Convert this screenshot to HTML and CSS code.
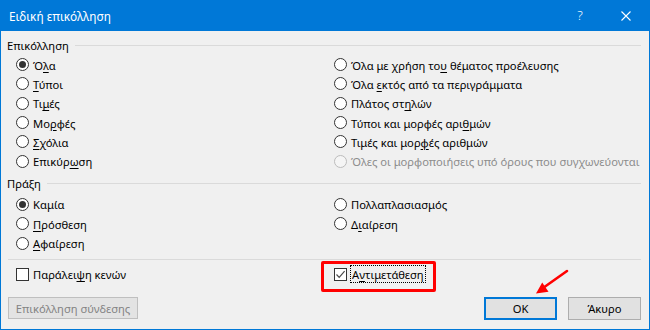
FILE: index.html
```html
<!DOCTYPE html>
<html lang="el">
<head>
<meta charset="utf-8">
<title>Ειδική επικόλληση</title>
<link rel="stylesheet" href="styles.css">
</head>
<body>
<div class="window">
  <div class="titlebar">
    <span class="title">Ειδική επικόλληση</span>
    <span class="capbtn help">?</span>
    <span class="capbtn close">
      <svg width="10" height="10" viewBox="0 0 10 10"><path d="M0.5 0.5 L9.5 9.5 M9.5 0.5 L0.5 9.5" stroke="#fff" stroke-width="1.1" fill="none"/></svg>
    </span>
  </div>
  <div class="content">
    <div class="group-head"><span class="group-label">Επικόλληση</span><span class="rule"></span></div>
    <div class="options six">
      <label class="opt"><span class="radio checked"></span><span>Ό<u>λ</u>α</span></label>
      <label class="opt"><span class="radio"></span><span>Όλα με χρήση το<u>υ</u> θέματος προέλευσης</span></label>
      <label class="opt"><span class="radio"></span><span><u>Τ</u>ύποι</span></label>
      <label class="opt"><span class="radio"></span><span>Όλα <u>ε</u>κτός από τα περιγράμματα</span></label>
      <label class="opt"><span class="radio"></span><span>Τι<u>μ</u>ές</span></label>
      <label class="opt"><span class="radio"></span><span>Πλάτος στ<u>η</u>λών</span></label>
      <label class="opt"><span class="radio"></span><span>Μο<u>ρ</u>φές</span></label>
      <label class="opt"><span class="radio"></span><span>Τύποι και μορφές αρι<u>θ</u>μών</span></label>
      <label class="opt"><span class="radio"></span><span><u>Σ</u>χόλια</span></label>
      <label class="opt"><span class="radio"></span><span>Τιμές και μορ<u>φ</u>ές αριθμών</span></label>
      <label class="opt"><span class="radio"></span><span>Επικύρ<u>ω</u>ση</span></label>
      <label class="opt disabled"><span class="radio"></span><span>Όλες οι μορφοποιήσεις υπό όρους που συγχωνεύονται</span></label>
    </div>
    <div class="group-head second"><span class="group-label">Πράξη</span><span class="rule"></span></div>
    <div class="options three">
      <label class="opt"><span class="radio checked"></span><span>Καμία</span></label>
      <label class="opt"><span class="radio"></span><span>Πολλαπλασιασμός</span></label>
      <label class="opt"><span class="radio"></span><span><u>Π</u>ρόσθεση</span></label>
      <label class="opt"><span class="radio"></span><span>Δ<u>ι</u>αίρεση</span></label>
      <label class="opt"><span class="radio"></span><span><u>Α</u>φαίρεση</span></label>
    </div>
    <div class="separator"></div>
    <div class="options checks">
      <label class="opt"><span class="check"></span><span>Παράλει<u>ψ</u>η κενών</span></label>
      <label class="opt"><span class="check checked"><svg width="11" height="11" viewBox="0 0 11 11"><path d="M1.5 5.5 L4.2 8.3 L9.6 2.2" stroke="#4a4a4a" stroke-width="1.2" fill="none"/></svg></span><span class="focus">Α<u>ν</u>τιμετάθεση</span></label>
    </div>
    <div class="buttons">
      <span class="btn disabled-btn">Επικόλληση σύνδεσης</span>
      <span class="btn default-btn">OK</span>
      <span class="btn">Άκυρο</span>
    </div>
  </div>
  <div class="highlight"></div>
  <svg class="arrow" width="650" height="330" viewBox="0 0 650 330">
    <line x1="567" y1="271" x2="543" y2="288" stroke="#ff0000" stroke-width="2.6" stroke-linecap="round"/>
    <polygon points="536,293.5 548.5,291.8 542.2,282.6" fill="#ff0000"/>
  </svg>
</div>
</body>
</html>
```
FILE: styles.css
```css
* { box-sizing: border-box; }
html, body { margin: 0; padding: 0; }
body {
  width: 650px;
  height: 330px;
  overflow: hidden;
  font-family: "Noto Sans", "Liberation Sans", sans-serif;
  font-size: 11.2px;
  color: #000;
}
.window {
  position: relative;
  width: 650px;
  height: 330px;
  background: #f0f0f0;
  border: 1px solid #0078d7;
  border-top: none;
}
.titlebar {
  height: 31px;
  background: #0078d7;
  color: #fff;
  display: flex;
  align-items: center;
  margin: 0 -1px;
  padding-left: 9px;
}
.title { flex: 1; font-size: 11.8px; padding-top: 1px; }
.capbtn {
  width: 46px;
  height: 31px;
  display: flex;
  align-items: center;
  justify-content: center;
}
.help { font-size: 13px; font-weight: 300; padding-bottom: 1px; }
.close { margin-right: 1px; }
.content {
  padding: 0 8px 0 6px;
}
.group-head {
  display: flex;
  align-items: center;
  height: 16px;
  margin-top: 6px;
}
.group-head.second { margin-top: 5px; }
.group-label { line-height: 16px; padding-top: 1px; }
.rule {
  flex: 1;
  height: 1px;
  background: #dadada;
  margin-left: 6px;
}
.options {
  display: grid;
  grid-template-columns: 318px 1fr;
  grid-auto-rows: 19.3px;
  margin-left: 9px;
}
.options.six { margin-top: 2px; }
.options.three { margin-top: 3px; }
.options.checks { margin-top: 5px; }
.opt {
  display: flex;
  align-items: center;
  gap: 4px;
  white-space: nowrap;
}
.opt > span:last-child { padding-top: 1px; }
.opt u { text-decoration-thickness: 1px; text-underline-offset: 2px; }
.radio {
  width: 13px;
  height: 13px;
  border: 1px solid #333;
  border-radius: 50%;
  background: #fff;
  flex: none;
  display: flex;
  align-items: center;
  justify-content: center;
}
.radio.checked::after {
  content: "";
  width: 7px;
  height: 7px;
  border-radius: 50%;
  background: #333;
}
.disabled { color: #8c8c8c; }
.disabled .radio { border-color: #bcbcbc; background: #f5f5f5; }
.check {
  width: 13px;
  height: 13px;
  border: 1px solid #333;
  background: #fff;
  flex: none;
  display: flex;
  align-items: center;
  justify-content: center;
}
.focus {
  outline: 1px dotted #000;
  outline-offset: 0;
  padding: 0 1px;
  line-height: 15px;
}
.separator {
  height: 1px;
  background: #dadada;
  margin-top: 6px;
  margin-left: 1px;
}
.buttons {
  display: flex;
  align-items: center;
  margin-top: 13px;
  margin-left: 1px;
  height: 23px;
}
.btn {
  width: 73px;
  height: 23px;
  border: 1px solid #adadad;
  background: #e1e1e1;
  display: flex;
  align-items: center;
  justify-content: center;
  margin-left: 11px;
  padding-top: 1px;
}
.disabled-btn {
  width: 130px;
  height: 22px;
  margin-left: 0;
  margin-right: auto;
  color: #838383;
  border-color: #bfbfbf;
  background: #e3e3e3;
}
.default-btn { border: 2px solid #0078d7; }
.highlight {
  position: absolute;
  left: 320px;
  top: 261px;
  width: 115px;
  height: 31px;
  border: 3px solid #ff0000;
  border-radius: 2px;
  pointer-events: none;
}
.arrow {
  position: absolute;
  left: -1px;
  top: 0;
  pointer-events: none;
}
```
